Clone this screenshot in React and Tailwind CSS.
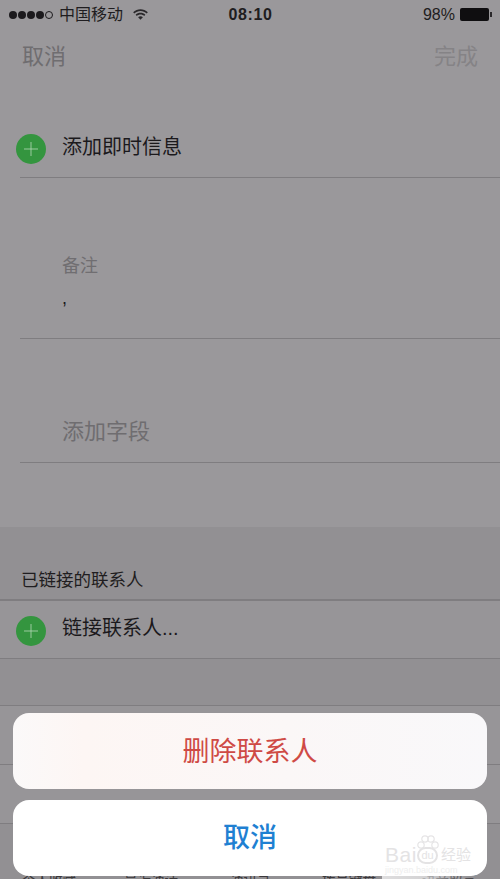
import React from 'react';

const cjk = { fontFamily: '"Liberation Sans", "Noto Sans CJK SC", sans-serif' };

const PlusBadge = () => (
  <div className="w-[30px] h-[30px] rounded-full bg-[#34953f] flex items-center justify-center shrink-0">
    <svg width="14" height="14" viewBox="0 0 14 14">
      <path d="M7 0V14M0 7H14" stroke="#b5d8b8" strokeWidth="0.8" />
    </svg>
  </div>
);

const Wifi = () => (
  <svg width="15" height="11" viewBox="0 0 16 12" fill="#2a282b">
    <path d="M0 3.6C4.4-.9 11.6-.9 16 3.6L14.8 4.9C11.1 1.2 4.9 1.2 1.2 4.9Z" />
    <path d="M2.7 6.3C5.6 3.4 10.4 3.4 13.3 6.3L12 7.6C9.8 5.4 6.2 5.4 4 7.6Z" />
    <path d="M5.4 9C6.8 7.6 9.2 7.6 10.6 9L8 11.8Z" />
  </svg>
);

const StatusBar = () => (
  <div className="h-[29px] pl-[9px] pr-[8px] grid grid-cols-[1fr_auto_1fr] items-center text-[#1f1d20]">
    <div className="flex items-center">
      <div className="flex items-center gap-[1px]">
        {[0, 1, 2, 3].map((i) => (
          <span key={i} className="w-[8px] h-[8px] rounded-full bg-[#1c1a1d]" />
        ))}
        <span className="w-[8px] h-[8px] rounded-full border border-[#1c1a1d]" />
      </div>
      <span className="ml-[6px] text-[16px] leading-none">中国移动</span>
      <span className="ml-[10px] flex"><Wifi /></span>
    </div>
    <span className="text-[16px] font-bold leading-none tracking-[0.6px]">08:10</span>
    <div className="flex items-center justify-end">
      <span className="text-[16px] leading-none">98%</span>
      <span className="ml-[5px] w-[29px] h-[13px] rounded-[2px] bg-[#0f0e10]" />
      <span className="ml-[1px] w-[2px] h-[5px] bg-[#2a282b]" />
    </div>
  </div>
);

const App = () => {
  return (
    <div className="w-[500px] h-[879px] overflow-hidden relative bg-[#9a989b]" style={cjk}>
      <StatusBar />

      <div className="h-[53px] px-[22px] pt-[2px] flex items-center justify-between text-[22px]">
        <span className="text-[#6f6d70]">取消</span>
        <span className="text-[#858386]">完成</span>
      </div>

      <div className="ml-[20px] mt-[32px] h-[64px] pt-[6px] border-b border-[#7f7d80] flex items-center">
        <div className="-ml-[4px]"><PlusBadge /></div>
        <span className="ml-[16px] text-[20px] text-[#1b191c] mt-[-3px]">添加即时信息</span>
      </div>

      <div className="ml-[20px] mt-[64px] h-[97px] pt-[11px] border-b border-[#7f7d80] pl-[42px]">
        <div className="text-[18px] leading-[26px] text-[#706e71]">备注</div>
        <div className="mt-[6px] text-[18px] leading-[26px] text-[#1b191c]">,</div>
      </div>

      <div className="ml-[20px] mt-[64px] h-[60px] pb-[2px] border-b border-[#7f7d80] pl-[42px] flex items-center">
        <span className="text-[22px] text-[#6f6d70]">添加字段</span>
      </div>

      <div className="mt-[64px] bg-[#929093] h-[352px]">
        <div className="h-[74px] border-b-2 border-[#7f7d80] pl-[21px] flex items-end pb-[7px]">
          <span className="text-[17.5px] leading-[24px] text-[#1f1d20]">已链接的联系人</span>
        </div>
        <div className="h-[58px] pt-[2px] bg-[#979598] border-b border-[#7f7d80] pl-[16px] flex items-center">
          <PlusBadge />
          <span className="ml-[16px] text-[20px] text-[#1b191c] mt-[-5px]">链接联系人...</span>
        </div>
        <div className="h-[47px] border-b border-[#7f7d80]" />
        <div className="h-[59px] bg-[#979598] border-b border-[#7f7d80]" />
        <div className="h-[59px] bg-[#979598] border-b border-[#7f7d80]" />
        <div className="pt-[49px] pl-[22px] flex text-[13.5px] leading-[16px] text-[#3a383b]">
          <span className="w-[102px]">个人收藏</span>
          <span className="w-[106px]">最近通话</span>
          <span className="w-[92px]">通讯录</span>
          <span className="w-[100px]">拨号键盘</span>
          <span>语音留言</span>
        </div>
      </div>

      {/* action sheet */}
      <div className="absolute left-[13px] right-[13px] top-[713px] flex flex-col gap-[11px]">
        <div className="h-[76px] rounded-[16px] bg-gradient-to-r from-[#fbf9f9] via-[#fdf6f4] via-[15%] to-[#f9f8fa] flex items-center justify-center pt-[2px]">
          <span className="text-[27px] text-[#cf4a45]">删除联系人</span>
        </div>
        <div className="h-[76px] rounded-[16px] bg-white flex items-center justify-center pt-[1px]">
          <span className="text-[27px] font-medium text-[#1f80d2]">取消</span>
        </div>
      </div>

      {/* watermark */}
      <div className="absolute left-[382px] top-[876px] w-[88px] h-[3px] bg-gradient-to-r from-white/70 via-white/60 to-transparent" />
      <svg className="absolute left-[415px] top-[834px]" width="26" height="17" viewBox="0 0 26 17" fill="none" stroke="#e6e5e6" strokeWidth="1.2">
        <circle cx="6" cy="11" r="3.2" />
        <circle cx="10" cy="5" r="3.2" />
        <circle cx="16" cy="5" r="3.2" />
        <circle cx="20" cy="11" r="3.2" />
      </svg>
      <div className="absolute left-[385px] top-[846px] flex items-center text-[#e4e3e4]">
        <span className="w-[32px] text-[21px] leading-[18px] tracking-[0.5px]">Bai</span>
        <span className="w-[21px] h-[17px] rounded-full border-2 border-[#e4e3e4] text-[11px] leading-[12px] text-center">du</span>
        <span className="ml-[3px] text-[15px] leading-[18px]">经验</span>
      </div>
      <div className="absolute left-[385px] top-[866px] text-[9px] leading-[9px] text-[#eeeeee]">jingyan.baidu.com</div>
    </div>
  );
};

export default App;
